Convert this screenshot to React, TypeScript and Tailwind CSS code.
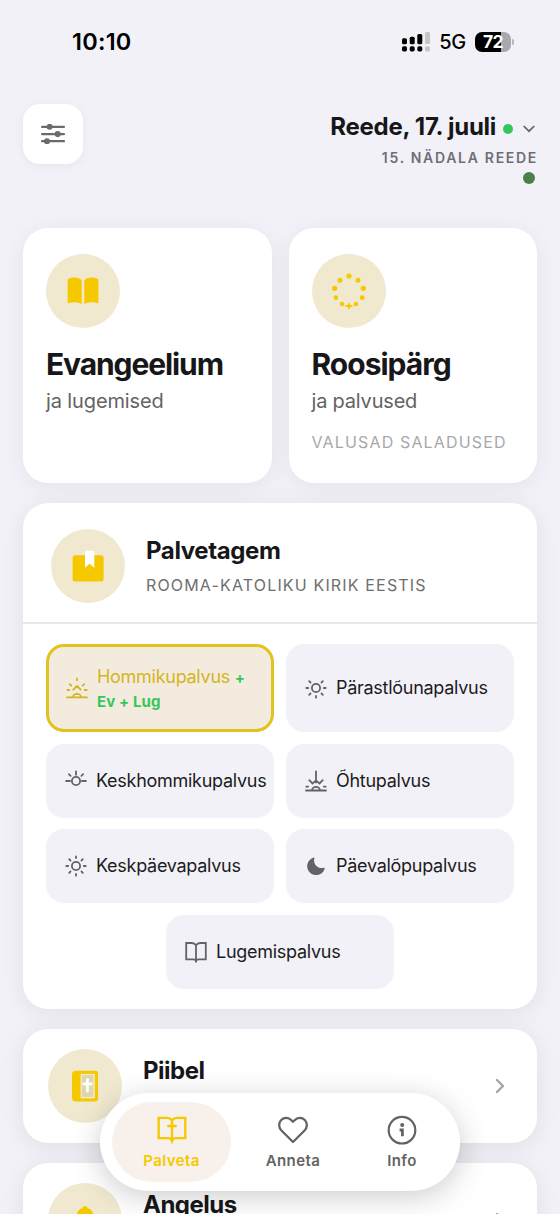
import { ReactNode } from "react";

const YELLOW = "#f5c800";

function SlidersIcon() {
  return (
    <svg width="24" height="20" viewBox="0 0 24 20" stroke="#6b6b6b" strokeWidth="2.3" strokeLinecap="round" fill="#6b6b6b">
      <path d="M1.1 2.8h21.800M1.1 10.1h21.800M1.1 17.2h21.800" />
      <circle cx="8.600" cy="2.8" r="1.9" />
      <circle cx="16.700" cy="10.1" r="1.9" />
      <circle cx="6" cy="17.2" r="1.9" />
    </svg>
  );
}

function OpenBookIcon() {
  return (
    <svg width="32" height="28" viewBox="0 0 32 28" fill={YELLOW}>
      <path d="M.6 2.4C4.6-.2 10.8-.2 14.7 3v24.2C11 25 5.6 24.9 1.6 26.3 1 26.5.6 26.1.6 25.5Z" />
      <path d="M31.4 2.4C27.4-.2 21.2-.2 17.3 3v24.2C21 25 26.4 24.9 30.4 26.3 31 26.5 31.4 26.1 31.4 25.5Z" />
    </svg>
  );
}

function RosaryIcon() {
  const beads = [
    [20, 5, 2.6],
    [29, 9.3, 2.5],
    [34.3, 17.3, 2.6],
    [33.2, 26.7, 2.4],
    [27, 33, 2.3],
    [13, 33, 2.3],
    [6.8, 26.7, 2.4],
    [5.7, 17.3, 2.6],
    [11, 9.3, 2.5],
  ];
  return (
    <svg width="40" height="40" viewBox="0 0 40 40" fill={YELLOW}>
      {beads.map(([x, y, r]) => (
        <circle key={`${x}-${y}`} cx={x} cy={y} r={r} />
      ))}
      <path d="M20 33v4M17.3 34.900h5.400" stroke={YELLOW} strokeWidth="2" strokeLinecap="round" />
    </svg>
  );
}

function BookmarkIcon() {
  return (
    <svg width="32" height="32" viewBox="0 0 32 32">
      <rect x=".6" y="5.3" width="31" height="26.3" rx="2.6" fill={YELLOW} />
      <path d="M13 2.2q0-1.500 1.500-1.500h6.300q1.500 0 1.500 1.500v15.600l-4.700-4-4.600 4Z" fill="#fff" />
    </svg>
  );
}

function BibleIcon() {
  return (
    <svg width="28" height="32" viewBox="0 0 28 32">
      <path d="M5 .8h19.600Q27 .8 27 3.200V29q0 2.400-2.400 2.400H5q-4 0-4-4V4.800q0-4 4-4Z" fill={YELLOW} />
      <rect x="9.600" y="3.900" width="14.200" height="24.400" fill="#f3ecd0" />
      <rect x="10.800" y="5" width="11.600" height="22" fill="#e0d6ae" />
      <path d="M16.400 8.600v13.600M11.500 13.800h9.800" stroke="#fff" strokeWidth="2.800" />
    </svg>
  );
}

function BellIcon() {
  return (
    <svg width="30" height="32" viewBox="0 0 30 32" fill={YELLOW}>
      <path d="M15 2c1.500 0 2.200 1 2.600 2 3.700 1.200 6 4.600 6 8.600v7l3 4.400H3.400l3-4.400v-7c0-4 2.300-7.400 6-8.600.4-1 1.100-2 2.600-2Z" />
      <circle cx="15" cy="26.500" r="3.500" />
    </svg>
  );
}

function LineIcon({ children }: { children: ReactNode }) {
  return (
    <svg
      width="22"
      height="22"
      viewBox="0 0 22 22"
      fill="none"
      stroke="currentColor"
      strokeWidth="1.8"
      strokeLinecap="round"
      className="shrink-0"
    >
      {children}
    </svg>
  );
}

const icons = {
  sunrise: (
    <LineIcon>
      <path d="M11 1.300v1.900M3.800 7.200l1.500 1.500M18.200 7.200l-1.500 1.500M1.300 13h2M18.700 13h2" />
      <path d="m7.300 12.600 3.700-3.600 3.700 3.600" strokeLinejoin="round" />
      <path d="M1 20.400h20M7 20.200a4 3.300 0 0 1 8 0" />
    </LineIcon>
  ),
  midMorning: (
    <LineIcon>
      <circle cx="11" cy="11" r="4.100" />
      <path d="M11 1.300v3.500M3.900 4.200l1.700 1.700M18.100 4.200l-1.700 1.700M1.100 11h4M16.900 11h4" />
    </LineIcon>
  ),
  noon: (
    <LineIcon>
      <circle cx="11" cy="11" r="4.100" />
      <path d="M11 1.300v1.800M11 18.900v1.800M1.300 11h1.900M18.800 11h1.900M4.200 4.200l1.300 1.300M17.800 4.200l-1.300 1.300M4.200 17.800l1.300-1.300M17.800 17.800l-1.300-1.300" />
    </LineIcon>
  ),
  afternoon: (
    <LineIcon>
      <circle cx="11" cy="11" r="4.100" />
      <path d="M11 18.900v1.800M1.300 11h1.900M18.800 11h1.900M4.200 4.200l1.300 1.300M17.800 4.200l-1.300 1.300M4.200 17.800l1.300-1.300M17.800 17.800l-1.300-1.300" />
    </LineIcon>
  ),
  sunset: (
    <LineIcon>
      <path d="M11 1.300v11.200M4.300 10.200l3.200 3.300L11 10.400l3.500 3.100 3.200-3.300" />
      <path d="M1.300 16.700h1.800M18.900 16.700h1.800M1 20.500h20M7 20.300a4 3.500 0 0 1 8 0" />
    </LineIcon>
  ),
  moon: (
    <svg width="22" height="22" viewBox="0 0 22 22" fill="currentColor" className="shrink-0">
      <path d="M8.700 2.600a.45.45 0 0 1 .7.5c-1.700 5.800 3.300 11.300 9.700 9.600.5-.1.800.3.6.7A8.900 8.900 0 1 1 8.700 2.600Z" />
    </svg>
  ),
  book: (
    <LineIcon>
      <path d="M11 4.200C10 2.600 8.500 2 6.800 2H1.200v16.300h7.300c1.200 0 2 .5 2.500 1.800.5-1.300 1.300-1.800 2.500-1.800h7.300V2h-5.600C13.500 2 12 2.600 11 4.200Zm0 0v16.200" />
    </LineIcon>
  ),
};

const prayers: { label: string; icon: keyof typeof icons }[] = [
  { label: "Pärastlõunapalvus", icon: "afternoon" },
  { label: "Keskhommikupalvus", icon: "midMorning" },
  { label: "Õhtupalvus", icon: "sunset" },
  { label: "Keskpäevapalvus", icon: "noon" },
  { label: "Päevalõpupalvus", icon: "moon" },
];

function IconCircle({ children }: { children: ReactNode }) {
  return (
    <div className="flex h-[74px] w-[74px] shrink-0 items-center justify-center rounded-full bg-[#f0e9d0]">
      {children}
    </div>
  );
}

function PrayerLabel({ label, icon }: { label: string; icon: keyof typeof icons }) {
  return (
    <>
      <span className="text-[#636367]">{icons[icon]}</span>
      <span className="whitespace-nowrap text-[18px] leading-6 tracking-[-0.28px] text-[#1c1c1e]">{label}</span>
    </>
  );
}

function StatusBar() {
  return (
    <div className="flex h-[84px] items-center justify-between pl-[72px] pr-[46px] text-black">
      <span className="text-[23.5px] font-semibold leading-6 tracking-[0.25px]">10:10</span>
      <div className="flex items-center">
        <svg width="28" height="20" viewBox="0 0 28 20">
          <rect x="0" y="6.2" width="5" height="6" rx="1.5" />
          <rect x="7.7" y="4.7" width="5" height="7.5" rx="1.5" />
          <rect x="15.3" y="2" width="5" height="10.2" rx="1.5" />
          <rect x="23" y="0" width="5" height="12" rx="1.5" fill="#c4c4c9" />
          <rect x="0" y="14.2" width="5" height="5.2" rx="1.7" />
          <rect x="7.7" y="14.2" width="5" height="5.2" rx="1.7" />
          <rect x="15.3" y="14.2" width="5" height="5.2" rx="1.7" />
          <rect x="23" y="14.2" width="5" height="5.2" rx="1.7" fill="#c4c4c9" />
        </svg>
        <span className="ml-[9px] text-[20px] font-medium leading-6 tracking-[-0.3px]">5G</span>
        <div className="ml-[9px] flex h-5 w-9 items-center overflow-hidden rounded-[7px] bg-[linear-gradient(90deg,#000_72%,#a9a9ad_72%)] pl-[8px]">
          <span className="text-[17.5px] font-bold leading-5 tracking-[-0.8px] text-white">72</span>
        </div>
        <div className="ml-[1px] h-[6px] w-[2px] rounded-r bg-[#b4b4b8]" />
      </div>
    </div>
  );
}

function TabBar() {
  return (
    <nav className="absolute left-[100px] top-[1093px] flex h-[98px] w-[360px] items-center rounded-[49px] bg-white pb-[5px] pl-3 pt-1 text-[15px] font-semibold leading-5 tracking-[0.4px] text-[#636363] shadow-[0_6px_30px_rgba(0,0,0,0.2)]">
      <a className="flex h-20 w-[119px] flex-col items-center rounded-[40px] bg-[#f8f0ea] pt-3 text-[#f5c800]">
        <svg width="30" height="32" viewBox="0 0 30 32" fill="none" stroke="currentColor" strokeWidth="2.3">
          <path d="M15 6.900C14 4.500 12 3.900 9.600 3.900H1.700v20.300h9.700c1.700 0 2.900.8 3.600 2.900.7-2.100 1.900-2.900 3.600-2.900h9.700V3.900h-7.900C18 3.900 16 4.500 15 6.900Zm0 0v20.800M10.300 12h9.400" />
        </svg>
        <span className="mt-[5px]">Palveta</span>
      </a>
      <a className="flex h-20 w-[124px] flex-col items-center pt-3">
        <svg width="32" height="32" viewBox="0 0 32 32" fill="none" stroke="currentColor" strokeWidth="2.300" strokeLinejoin="round">
          <path d="M16 28 4.700 16.800C1.400 13.500 1.400 8.800 4.200 6c3-2.900 7.300-2.700 10.200.2L16 7.800l1.600-1.600c2.900-2.900 7.200-3.100 10.200-.2 2.800 2.800 2.800 7.500-.5 10.800Z" />
        </svg>
        <span className="mt-[5px]">Anneta</span>
      </a>
      <a className="flex h-20 w-[94px] flex-col items-center pt-3">
        <svg width="32" height="32" viewBox="0 0 32 32" fill="none" stroke="currentColor" strokeWidth="2.200">
          <circle cx="16" cy="16.200" r="13.300" />
          <circle cx="16.200" cy="11" r="2" fill="currentColor" stroke="none" />
          <path d="M13.600 16h2.800v6.200" strokeWidth="2.800" />
        </svg>
        <span className="mt-[5px]">Info</span>
      </a>
    </nav>
  );
}

export default function App() {
  return (
    <div className="relative h-[1214px] w-[560px] overflow-hidden bg-[#f2f1f7] font-['Inter',sans-serif] text-[#17171a]">
      <StatusBar />

      <header className="flex h-[144px] justify-between px-[23px] pt-5">
        <button className="flex h-[60px] w-[60px] items-center justify-center rounded-[17px] bg-white shadow-[0_2px_10px_rgba(0,0,0,0.05)]">
          <SlidersIcon />
        </button>
        <div className="flex flex-col items-end pt-[11px]">
          <div className="flex items-center">
            <h1 className="text-[24px] font-bold leading-6 tracking-[-0.28px]">Reede, 17. juuli</h1>
            <span className="ml-[7px] mt-1 h-[10px] w-[10px] rounded-full bg-[#34c759]" />
            <svg width="12" height="8" viewBox="0 0 12 8" fill="none" stroke="#636367" strokeWidth="1.7" strokeLinecap="round" className="ml-[10px] mr-[2px] mt-[3px]">
              <path d="m1.200 1.500 4.800 4.700 4.800-4.700" />
            </svg>
          </div>
          <p className="mt-[9px] text-[14px] font-semibold leading-5 tracking-[1.7px] text-[#6e6e76] -mr-[1px]">15. NÄDALA REEDE</p>
          <span className="mr-[2.500px] mt-1 h-[11.500px] w-[11.500px] rounded-full bg-[#4a804a]" />
        </div>
      </header>

      <main className="flex flex-col gap-5 px-[23px]">
        <div className="grid grid-cols-2 gap-[17px]">
          <section className="h-[255px] rounded-[25px] bg-white px-[23px] pt-[26px] shadow-[0_4px_24px_rgba(0,0,0,0.06)]">
            <IconCircle>
              <OpenBookIcon />
            </IconCircle>
            <h2 className="mt-[18px] text-[30px] font-bold leading-9 tracking-[-1.100px]">Evangeelium</h2>
            <p className="mt-[7px] text-[20px] leading-6 tracking-[-0.120px] text-[#636363]">ja lugemised</p>
          </section>
          <section className="h-[255px] rounded-[25px] bg-white px-[23px] pt-[26px] shadow-[0_4px_24px_rgba(0,0,0,0.06)]">
            <IconCircle>
              <RosaryIcon />
            </IconCircle>
            <h2 className="mt-[18px] text-[30px] font-bold leading-9 tracking-[-1px]">Roosipärg</h2>
            <p className="mt-[7px] text-[20px] leading-6 tracking-[-0.200px] text-[#636363]">ja palvused</p>
            <p className="mt-[17px] whitespace-nowrap text-[16px] leading-6 tracking-[1.150px] text-[#a8a8a8]">VALUSAD SALADUSED</p>
          </section>
        </div>

        <section className="h-[506px] rounded-[25px] bg-white shadow-[0_4px_24px_rgba(0,0,0,0.07)]">
          <div className="flex h-[121px] items-center border-b-2 border-[#e8e8ec] pl-7 pt-[6px]">
            <IconCircle>
              <BookmarkIcon />
            </IconCircle>
            <div className="ml-[21px]">
              <h2 className="text-[24px] font-bold leading-8 tracking-[-0.4px]">Palvetagem</h2>
              <p className="mt-[6px] text-[16px] leading-6 tracking-[1.160px] text-[#6e6e6e]">ROOMA-KATOLIKU KIRIK EESTIS</p>
            </div>
          </div>
          <div className="grid grid-cols-2 grid-rows-[88px_74px_74px] gap-x-3 gap-y-[11.500px] px-[23px] pt-5">
            <button className="flex items-center rounded-[18px] border-[3px] border-[#e2c21c] bg-[#f4ebdf] pl-[17px] text-left">
              <span className="text-[#d5b41f]">{icons.sunrise}</span>
              <span className="ml-[9px] pt-[1px] text-[18px] leading-[23px] tracking-[-0.280px] text-[#d5b41f]">
                Hommikupalvus{" "}
                <b className="text-[15px] font-bold tracking-[0.120px] text-[#34c759]">
                  +<br />
                  Ev + Lug
                </b>
              </span>
            </button>
            {prayers.map((p) => (
              <button key={p.label} className="flex items-center gap-[9px] rounded-[18px] bg-[#f2f1f7] pl-[19px]">
                <PrayerLabel label={p.label} icon={p.icon} />
              </button>
            ))}
          </div>
          <button className="mx-auto mt-3 flex h-[74px] w-[228px] items-center gap-[9px] rounded-[18px] bg-[#f2f1f7] pl-[19px]">
            <PrayerLabel label="Lugemispalvus" icon="book" />
          </button>
        </section>

        {[
          { title: "Piibel", icon: <BibleIcon /> },
          { title: "Angelus", icon: <BellIcon /> },
        ].map((item) => (
          <section
            key={item.title}
            className="flex h-[114px] shrink-0 items-center rounded-[25px] bg-white pl-[25px] pr-8 shadow-[0_4px_24px_rgba(0,0,0,0.08)]"
          >
            <IconCircle>{item.icon}</IconCircle>
            <h2 className="mb-[30px] ml-[21px] flex-1 text-[24px] font-bold leading-8 tracking-[-0.500px]">{item.title}</h2>
            <svg width="10" height="16" viewBox="0 0 10 16" fill="none" stroke="#a3a3a3" strokeWidth="2.300" strokeLinecap="round" strokeLinejoin="round">
              <path d="m2 2 6 6-6 6" />
            </svg>
          </section>
        ))}
      </main>

      <TabBar />
    </div>
  );
}
